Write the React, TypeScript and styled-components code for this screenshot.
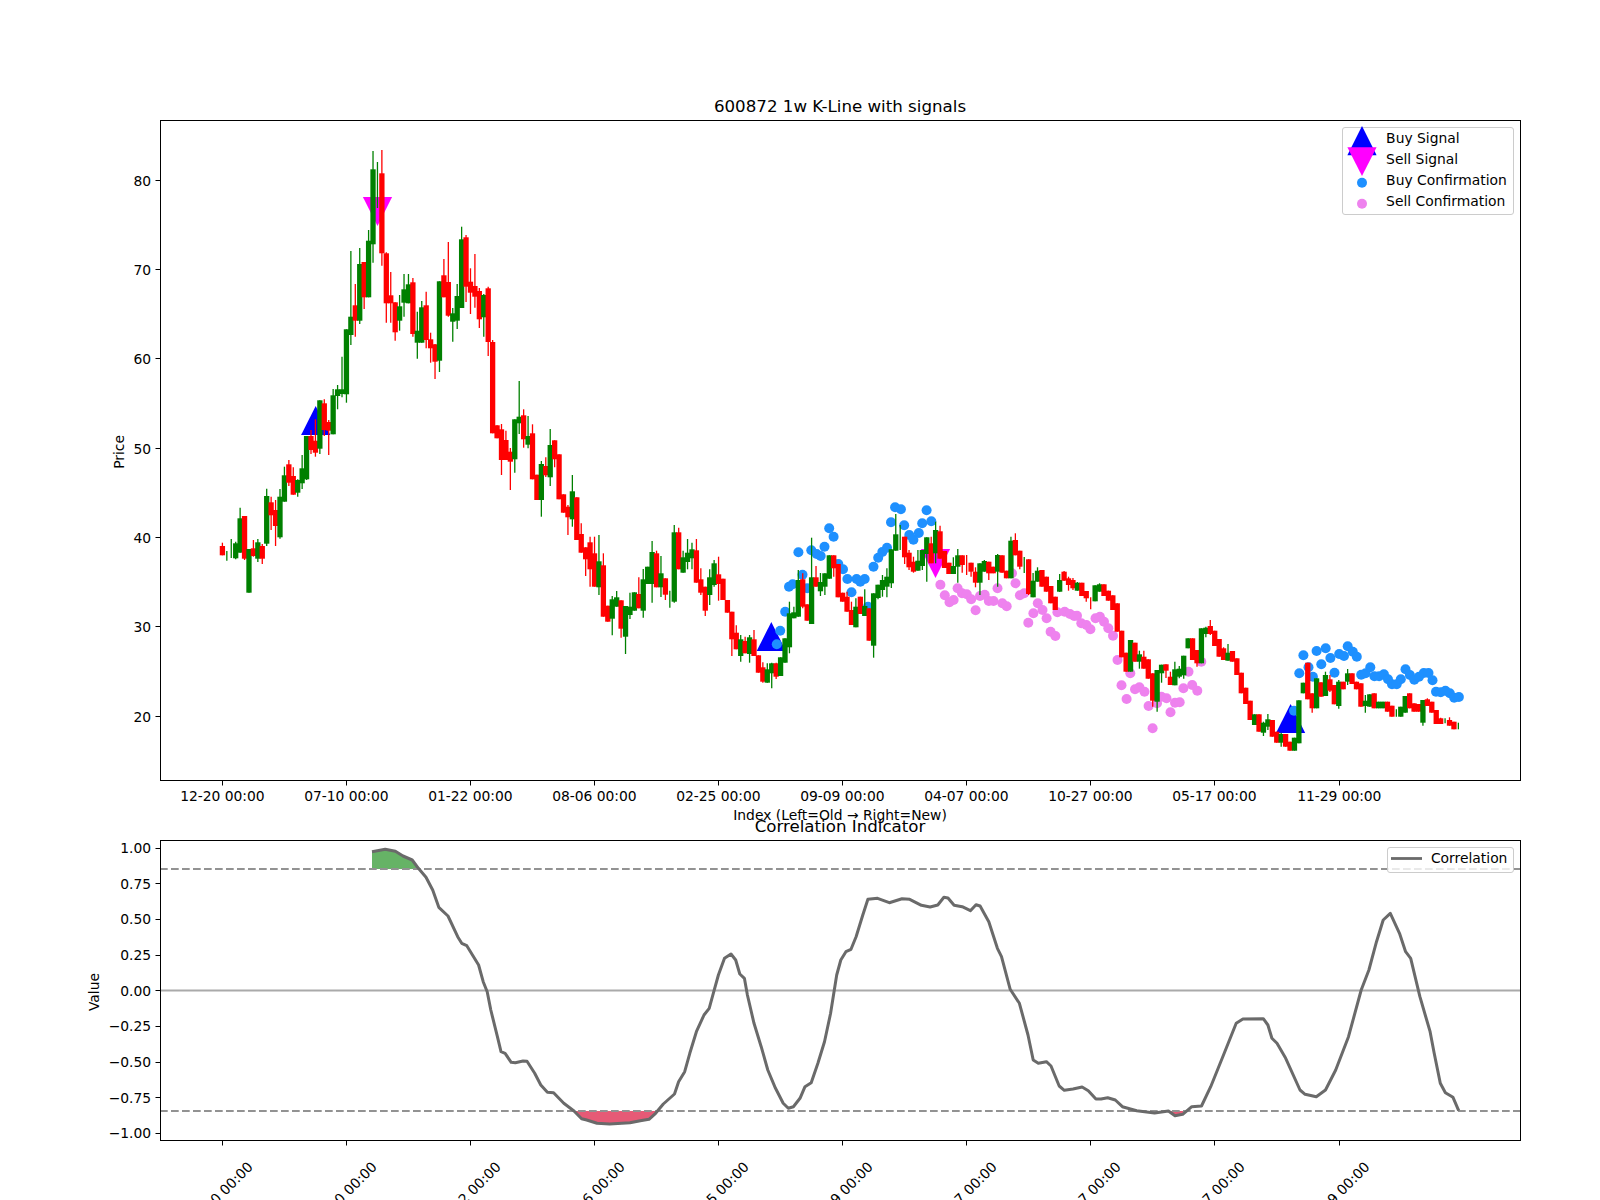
import styled, { createGlobalStyle } from "styled-components";

type Candle = ["g" | "r", number, number, number?, number?];
type Point = [number, number];

const GlobalStyle = createGlobalStyle`
  html, body {
    margin: 0;
    padding: 0;
    background: #fff;
  }
`;

// y values are pixels of the 1600x1200 figure, top of body, bottom of body, then wick ends
const candles: Candle[] = [
  ["r", 546, 555.3, 542.7, 555.3], ["g", 0, 0, 551, 560.7], ["g", 0, 0, 539, 558], ["g", 543.3, 558.3, 541.7, 559.3],
  ["g", 518.3, 552.7, 507.7, 552.7], ["r", 516, 558.7, 516, 560], ["g", 549, 592.7], ["r", 548.3, 556, 540, 556.7],
  ["g", 542.3, 558.7, 539, 562], ["r", 546, 558.7, 544, 564], ["g", 496, 543.7, 488.7, 546], ["r", 502.3, 515.3, 496.7, 530],
  ["r", 510, 526, 500, 546], ["g", 496.7, 537.3, 489, 538.7], ["g", 475.3, 501.7, 466.7, 501.7], ["r", 464.3, 482.7, 460, 486],
  ["r", 476, 494.7, 467.3, 494.7], ["g", 480, 492.7, 479.3, 496.7], ["g", 468.3, 483.3, 455, 489], ["g", 436, 479.3, 436, 480],
  ["r", 436, 450, 430, 454], ["r", 440.7, 452.7, 419.3, 456.7], ["g", 400.3, 448.7, 400.3, 454], ["r", 403.3, 430, 399.3, 436],
  ["r", 422, 430.7, 420, 455], ["g", 395.3, 434.3, 389, 434.3], ["g", 389.3, 396, 385, 409.3], ["g", 389.3, 394, 356.7, 397.3],
  ["g", 329.3, 394.3, 329.3, 402.7], ["g", 316.7, 335, 251, 345], ["r", 305.3, 320.7, 284, 336.7], ["g", 264, 320.7, 248, 324],
  ["r", 262, 297.3, 262, 309], ["g", 240.7, 297.3, 230, 297.3], ["g", 169.3, 244.3, 151, 262.7], ["g", 0, 0, 162, 208],
  ["r", 173.3, 253.3, 150, 265.7], ["r", 253.3, 303.3, 252.3, 322.7], ["r", 295.3, 303.3, 272, 322.7], ["r", 302.3, 332.3, 302.3, 340.7],
  ["g", 306.3, 320.7, 295, 330.7], ["g", 289.3, 302.7, 274, 316.7], ["g", 284.3, 303.3, 274, 303.3], ["r", 282.3, 334, 278, 336.7],
  ["g", 330.7, 342.7, 311.7, 358.7], ["g", 307.3, 342.7, 301, 342.7], ["r", 305.3, 340, 291.7, 348.3], ["r", 339.3, 348.3, 332.7, 362.7],
  ["r", 344.3, 361.7, 344, 379], ["g", 281.3, 360.7, 281.3, 372], ["r", 275.3, 297.3, 259, 297.3], ["r", 282, 315.7, 242, 316.7],
  ["g", 313.3, 321.7, 308, 341.7], ["g", 296, 320.7, 284, 329], ["g", 239.3, 308, 226.7, 308], ["r", 237.3, 286.7, 235, 302],
  ["r", 281.7, 292.7, 268.3, 314], ["r", 286, 296.7, 254, 307.7], ["r", 291, 319.3, 288, 328], ["g", 295, 317.3, 294, 336.7],
  ["r", 288.3, 342, 286.7, 356], ["r", 342, 433.3, 340, 433.3], ["r", 425.3, 438.3], ["r", 429.3, 460, 424, 475],
  ["r", 440, 460, 430.7, 460], ["r", 451.7, 461.7, 448, 490], ["g", 419.3, 459.3, 419.3, 472.7], ["g", 416.7, 423.3, 381, 434],
  ["r", 415.3, 439.3, 409.3, 447.7], ["g", 436, 444.7, 416, 448.3], ["r", 433.3, 479.3, 424.3, 479.3], ["r", 474.7, 500],
  ["g", 464, 500, 461, 516.7], ["r", 466, 475.3, 457.3, 477], ["g", 445, 477.3, 429, 486], ["r", 440.3, 459.3, 440.3, 467.3],
  ["r", 454.3, 499.3], ["r", 494.3, 512.7], ["r", 506.7, 517.3, 505, 535], ["g", 491.3, 519.3, 475, 526.7],
  ["r", 497.3, 540], ["r", 534, 552.7, 523.3, 552.7], ["r", 547.3, 559.3, 547.3, 576], ["r", 542.3, 569.3, 536.7, 586.7],
  ["r", 553.3, 586.7, 536.7, 586.7], ["g", 561.3, 587.3, 535, 595], ["r", 565.3, 616.7, 553.3, 616.7], ["r", 605.7, 621.7],
  ["g", 599.3, 618.7, 596, 635.3], ["g", 597.3, 606.7, 591, 606.7], ["r", 600.3, 628.7, 600.3, 637.7], ["g", 606, 636.7, 606, 654],
  ["g", 606.7, 615, 592.7, 619], ["g", 592.3, 610.7], ["r", 594, 608.3, 577.3, 608.3], ["g", 579.3, 610.7, 569, 617.7],
  ["g", 566.7, 584], ["g", 552, 584, 541, 602.7], ["r", 553.3, 587.3, 550.7, 587.3], ["g", 573.3, 587.3, 556, 597],
  ["r", 578.3, 594.7, 578.3, 600], ["g", 0, 0, 590.7, 607.7], ["g", 532.3, 601.7, 525, 602.7], ["r", 532.3, 569.3, 527.7, 569.3],
  ["g", 557.3, 572.7, 550.7, 572.7], ["g", 552.7, 562, 539, 569.3], ["g", 549.3, 558.3, 542.7, 569.3], ["r", 550.3, 582.7, 539, 582.7],
  ["r", 579.3, 592.7, 568.3, 595], ["r", 586.7, 610.7, 586.7, 616], ["g", 577.3, 595, 569.3, 605], ["g", 563.3, 585, 560, 586.7],
  ["r", 574.3, 584, 556.7, 600.7], ["r", 578.7, 600], ["r", 600, 612.7], ["r", 611.7, 639.3, 611.7, 656],
  ["r", 632.7, 649.3, 625.3, 649.3], ["g", 639.3, 656, 635, 661.7], ["r", 641, 653.3, 636.7, 653.3], ["g", 637.3, 654, 635, 662.7],
  ["r", 639.3, 656, 630, 656], ["r", 655.3, 672.7], ["r", 667.3, 681.7, 662.3, 682.7], ["g", 669.3, 682.7, 663.3, 682.7],
  ["g", 663.3, 673.3, 662.7, 688.3], ["r", 663.3, 676.7, 662.7, 679], ["g", 657.3, 676], ["g", 638.3, 662.7],
  ["g", 613.3, 647.3, 601.7, 653.3], ["g", 612.3, 618.3, 606.7, 618.3], ["g", 580, 616.7, 570, 616.7], ["r", 579.3, 606.7, 573.3, 608.3],
  ["r", 604.3, 620.7], ["g", 577.3, 624, 537.7, 624], ["r", 577.3, 586.7, 566, 586.7], ["g", 582, 591.3, 573, 596],
  ["g", 573.3, 586.7, 573.3, 595], ["g", 555.3, 578.7], ["r", 555.3, 568.3, 555.3, 576.7], ["r", 564, 597.3],
  ["r", 592.7, 601.7], ["r", 596.7, 611.7, 591.7, 611.7], ["r", 610, 625, 601.7, 625], ["g", 606.7, 627.3, 598.3, 627.3],
  ["r", 596.7, 614], ["g", 606, 616, 589.3, 616], ["r", 608.3, 640.7], ["g", 593.3, 645.7, 593.3, 657.7],
  ["g", 584.7, 598, 584.7, 599.3], ["g", 580, 590, 575, 596.7], ["g", 576.7, 586.7, 568.3, 597.3], ["g", 549.3, 583.3, 549.3, 588],
  ["g", 534.3, 550.7, 514, 550.7], ["g", 0, 0, 525, 550], ["r", 536.7, 557.3, 536.7, 564], ["r", 552.7, 567.3, 550, 570],
  ["r", 561.7, 571.7, 556.7, 572.7], ["g", 560.7, 570.7, 550, 570.7], ["g", 550, 566, 550, 570], ["g", 537.3, 554, 537.3, 581.7],
  ["r", 543.3, 563.3, 536.7, 563.3], ["g", 530, 553.3, 521.7, 563.3], ["r", 531.3, 558.7, 525.7, 558.7], ["r", 551, 568],
  ["r", 562.7, 574], ["g", 566, 574, 557.3, 573.3], ["g", 555.3, 566.7, 549, 582.7], ["r", 555.3, 565, 555.3, 572.7],
  ["r", 0, 0, 555, 575], ["r", 562.7, 571.7, 562.7, 576.7], ["r", 571.7, 582.7, 567.3, 587.3], ["g", 563.3, 582.7, 563.3, 595],
  ["g", 561, 571.7, 560, 571.7], ["r", 561.7, 573.3, 561.7, 580], ["r", 566.7, 573.3], ["g", 555, 571.7, 554, 586.7],
  ["r", 555.3, 572.7], ["r", 570.7, 578.3], ["g", 540.7, 578.3, 536.7, 578.3], ["r", 540, 555.3, 533.3, 555.3],
  ["r", 550.7, 566.7, 550.7, 569.3], ["g", 0, 0, 557, 573], ["r", 559.3, 594, 559.3, 595], ["g", 580.7, 597.3, 573, 597.3],
  ["g", 570.7, 581.7, 567.3, 581.7], ["r", 570, 586.7], ["r", 576.7, 591.7], ["r", 586, 603.3],
  ["r", 596.7, 610], ["g", 580, 591.7, 574, 592], ["r", 571.7, 580.7, 571, 581], ["r", 578.3, 585, 576.7, 590.7],
  ["r", 580, 588.3, 578, 590], ["g", 582.7, 590.7, 582, 590.7], ["r", 582.7, 596], ["r", 591, 598.3, 591, 601.7],
  ["r", 0, 0, 597.3, 609.3], ["g", 585.3, 601.3], ["g", 584.3, 591.7, 583.3, 591.7], ["r", 584.3, 596],
  ["r", 590.7, 600.7], ["r", 595.3, 610], ["r", 603.3, 631.7], ["r", 630.7, 657.3],
  ["r", 652.7, 671.7], ["g", 640, 671.7], ["r", 642.7, 661.7], ["g", 654.3, 661.7, 650.7, 668.7],
  ["r", 656.7, 668.7, 650.7, 668.7], ["r", 659.3, 678.7], ["r", 673.3, 700.7, 673.3, 706.7], ["g", 670, 701.7, 670, 711.7],
  ["g", 664.7, 673.3, 664.7, 682.7], ["r", 664.3, 670.7, 664.3, 678], ["r", 676.7, 685, 671.7, 685], ["g", 669.3, 685.3, 661.7, 685.3],
  ["g", 668.7, 676.7, 666, 678.3], ["g", 655.7, 675.3, 655.7, 678.7], ["g", 638.3, 648.3], ["r", 638.3, 660],
  ["r", 650, 663.3, 650, 666.7], ["g", 628.3, 663.3], ["g", 627.7, 634, 626.7, 637.3], ["r", 626, 634, 620, 635],
  ["r", 630.7, 646], ["r", 639, 656.7], ["r", 648.3, 660, 647.3, 660], ["g", 652.7, 660.7, 644, 660.7],
  ["r", 651, 661.7], ["r", 658.3, 675], ["r", 672.7, 693.3], ["r", 687.7, 704],
  ["r", 700.7, 720], ["g", 714.3, 725], ["r", 714.3, 731.7], ["g", 722.7, 732.7, 721.7, 736],
  ["g", 719.3, 726.7, 714, 730], ["r", 720, 736.7], ["r", 731.7, 742.7], ["g", 734, 742.7, 732.7, 746.7],
  ["r", 734, 746.7], ["r", 741.7, 750.7], ["g", 737.7, 750.7], ["g", 700.3, 743.3],
  ["g", 682.7, 693.3], ["r", 662.7, 699.3], ["r", 693.3, 708.3, 693.3, 712.7], ["g", 678.3, 708.3],
  ["r", 682.3, 696.7], ["g", 675, 696, 671.7, 696], ["r", 679.3, 690.7, 675, 692], ["r", 685, 704.3],
  ["g", 681.7, 706, 680, 708.7], ["r", 681.7, 689.3], ["g", 673.3, 681.7, 669, 685], ["r", 673.3, 684],
  ["r", 681.7, 689.3], ["r", 683.3, 706.7], ["g", 700.7, 706, 695, 712.7], ["g", 694.3, 706.7],
  ["r", 693.3, 708.3], ["g", 701.7, 708.3], ["g", 701.7, 708.3], ["r", 701.7, 711.7],
  ["r", 705.7, 716.7], ["g", 0, 0, 709.3, 716.7], ["g", 706.7, 716.7], ["g", 696, 712.7],
  ["r", 693.3, 708.3], ["r", 703.3, 711.7], ["r", 704, 711.7], ["g", 700, 722.7, 700, 725.7],
  ["r", 699.3, 706, 698.3, 706], ["r", 701.7, 712.7], ["r", 710, 724], ["r", 718.3, 724, 717.7, 724],
  ["g", 0, 0, 718.3, 723.3], ["r", 720, 725.7, 717.3, 725.7], ["r", 721.7, 729.3], ["g", 0, 0, 722.7, 729.3],
];

const buyDots: Point[] = [
  [780.2, 630.7], [776.8, 644.3], [785.2, 611.7], [789, 586.7], [792.7, 584.3], [802.5, 574.7], [798.4, 552.3], [807.2, 588.3],
  [811.3, 550.3], [816.7, 554], [820.7, 556], [824.5, 546.7], [829.2, 528.3], [833.6, 536.7], [838.3, 564], [843, 569.3],
  [847.4, 579], [851.5, 592.3], [856.6, 579], [860.3, 581.7], [864.7, 579], [868, 606.7], [873.5, 566.7], [878.2, 557.7],
  [882.3, 552], [887, 547.7], [891, 522.3], [895.1, 507.3], [900.9, 509.3], [904.2, 525.3], [909.3, 535], [913.4, 539.7],
  [918.8, 533], [922.2, 523.3], [926.6, 510.3], [931.3, 521.3], [1294, 710.7], [1299.3, 673.3], [1303.4, 655.3], [1308.5, 667.3],
  [1312.9, 676.7], [1316.6, 651], [1321.3, 664.3], [1325.7, 648.3], [1330.4, 658], [1334.5, 672.7], [1339.2, 654], [1344, 656],
  [1347.7, 646.3], [1352.8, 651.7], [1356.8, 656.7], [1361.2, 674.7], [1365.6, 673.3], [1370.3, 667.3], [1374.4, 676.3], [1379.1, 676.3],
  [1383.9, 674.3], [1388, 679.3], [1392, 684.3], [1396.7, 684.3], [1400.8, 679.3], [1405.5, 669.3], [1409.9, 675], [1414.3, 679.7],
  [1419, 676.7], [1423.8, 673], [1428.5, 673], [1432.5, 680.3], [1436, 691.7], [1440.7, 692.3], [1445.4, 690.7], [1449.8, 693.3],
  [1454.2, 697.7], [1458.9, 697],
];

const sellDots: Point[] = [
  [940.4, 584.7], [944.8, 595.3], [949.5, 602.3], [953.6, 600], [957.6, 588.3], [962, 593.3], [966.8, 594.3], [971.2, 599.3],
  [975.6, 610.3], [980, 596], [984.7, 594.7], [988.8, 601], [993.5, 601], [997.5, 588.3], [1002.3, 603.3], [1006.7, 606.3],
  [1012, 573.3], [1015.5, 583.3], [1019.9, 595.3], [1024.2, 593.3], [1028.3, 622.7], [1033.4, 613.3], [1037.8, 603.3], [1042.5, 610],
  [1046.6, 618.3], [1050.6, 631.7], [1055.4, 636], [1057.4, 612.3], [1064.7, 611.7], [1070, 614], [1074.2, 616], [1077, 615.7],
  [1081.3, 623.3], [1086.4, 625], [1090.4, 629.3], [1095.5, 618.3], [1099.9, 616.7], [1104, 621.7], [1108.3, 628.3], [1113, 635.7],
  [1117.5, 660], [1121.5, 685.3], [1126.6, 699], [1130.3, 673.3], [1135, 689.3], [1139.4, 687.3], [1144.5, 691.7], [1148.6, 706],
  [1152.6, 728.3], [1157, 703.3], [1161.4, 696.7], [1166.5, 698.3], [1170.5, 712.3], [1175, 702.7], [1179.7, 702.3], [1183.4, 688.3],
  [1188.5, 671.7], [1192.2, 685], [1197.3, 690.7], [1201.3, 661.7],
];

const correlation: Point[] = [
  [372, 851.7], [385.2, 849.3], [395.4, 851.3], [403, 856], [412.2, 860], [418.4, 868.3], [426, 877.3], [432.7, 890],
  [438.8, 907.3], [448, 916], [457.7, 936.7], [461.7, 943.3], [466.8, 945.7], [478.6, 965], [483.2, 981.7], [487.2, 991.7],
  [490.8, 1010], [497.4, 1036.7], [501, 1051.7], [505.1, 1053.3], [511.2, 1062.3], [515.3, 1062.7], [523, 1061], [527, 1061.3],
  [534.7, 1073.3], [540.8, 1085], [547.4, 1092.3], [553.6, 1092.7], [563.8, 1103.3], [574, 1111], [581.6, 1118.7], [586.7, 1120],
  [597, 1123.3], [609.7, 1124], [630, 1122.7], [640.3, 1120.7], [649, 1119.3], [655.6, 1113.3], [663.3, 1104], [674.5, 1094],
  [678.6, 1081.7], [684.7, 1071.7], [689.8, 1053.3], [696.4, 1031.7], [704, 1015], [709.2, 1008.3], [713.3, 993.3], [718.4, 975],
  [724.5, 958.3], [731, 954], [735.7, 960], [739.8, 974], [744.4, 978.3], [747.4, 995], [754, 1023.3], [761.2, 1046.7],
  [767.8, 1070], [775.5, 1088.3], [783.2, 1103.3], [788.3, 1108.3], [793.4, 1106.7], [800, 1098.3], [805, 1086.7], [811.2, 1082.7],
  [817.9, 1063.3], [824.5, 1041.7], [830.6, 1013.3], [836.7, 975], [840.8, 960], [845.9, 951.7], [851, 949.3], [856.1, 936.7],
  [862.8, 915], [867.9, 899.3], [877.6, 898.3], [889.3, 902.7], [902, 898.7], [909.7, 899.3], [921.4, 905.3], [930.1, 907],
  [937.8, 905], [943.9, 897.3], [948, 898], [954.1, 905.3], [962.2, 906.7], [970.4, 910.7], [976, 904.7], [980.1, 906],
  [988.8, 921.7], [997.4, 948.3], [1001.5, 956.7], [1010.2, 989.3], [1019.4, 1003.3], [1028, 1035], [1033.2, 1060], [1038.3, 1063.3],
  [1046.4, 1061.7], [1051, 1066], [1059.2, 1086], [1064.3, 1090.3], [1073, 1089], [1082.1, 1087], [1088.3, 1090.7], [1095.9, 1099],
  [1101, 1099], [1107.7, 1097.7], [1115.3, 1100], [1122.4, 1106.7], [1136.7, 1110.7], [1154.6, 1113], [1168.4, 1111], [1175, 1115.7],
  [1182.7, 1114.3], [1191.8, 1106.7], [1201.5, 1106], [1210.7, 1086.7], [1223.5, 1055], [1236.2, 1023.3], [1242.9, 1019], [1263.3, 1018.7],
  [1267.9, 1025], [1271.9, 1038.3], [1277, 1043.3], [1285.7, 1058.3], [1300, 1090], [1305.1, 1094.3], [1316.3, 1096.7], [1325.5, 1090],
  [1335.7, 1070], [1348.5, 1036.7], [1361.2, 990], [1368.9, 970], [1376.5, 941.7], [1383.2, 920], [1390.3, 913.3], [1399.5, 933.3],
  [1405.6, 951.7], [1410.7, 958.3], [1419.9, 996.7], [1430.1, 1031.7], [1434.2, 1053.3], [1440.3, 1083.3], [1445.4, 1092.7], [1453, 1097.3],
  [1458.7, 1110.7],
];

const dateLabels = [
  "12-20 00:00", "07-10 00:00", "01-22 00:00", "08-06 00:00", "02-25 00:00",
  "09-09 00:00", "04-07 00:00", "10-27 00:00", "05-17 00:00", "11-29 00:00",
];
const dateTicks = [222.4, 346.4, 470.4, 594.4, 718.4, 842.4, 966.4, 1090.4, 1214.4, 1339.3];
const priceTicks = [20, 30, 40, 50, 60, 70, 80];
const valueTicks = [1, 0.75, 0.5, 0.25, 0, -0.25, -0.5, -0.75, -1];

const candleX = (i: number) => 222.4 + 4.43 * i;
const priceY = (p: number) => 180.3 + (80 - p) * 8.93;
const valueY = (v: number) => 990.7 - 142.65 * v;
const snap = (n: number) => Math.floor(n) + 0.5;
const formatValue = (v: number) => (v < 0 ? "\u2212" : "") + Math.abs(v).toFixed(2);
const toPoints = (pts: Point[]) => pts.map((p) => p.join(",")).join(" ");

const Triangle = ({ x, y, down }: { x: number; y: number; down?: boolean }) => {
  const base = down ? y - 29 : y + 29;
  return (
    <polygon
      points={`${x},${y} ${x - 14.6},${base} ${x + 14.6},${base}`}
      fill={down ? "#ff00ff" : "#0000ff"}
    />
  );
};

const TickMarks = ({ xs, ys, bottom, left }: { xs: number[]; ys: number[]; bottom: number; left: number }) => (
  <g stroke="#000" strokeWidth={1}>
    {xs.map((x) => (
      <line key={x} x1={snap(x)} x2={snap(x)} y1={bottom} y2={bottom + 5} />
    ))}
    {ys.map((y) => (
      <line key={y} x1={left - 5} x2={left} y1={snap(y)} y2={snap(y)} />
    ))}
  </g>
);

const PriceChart = () => (
  <Plot width={1360} height={660} viewBox="160 120 1360 660">
    <Triangle x={315.7} y={406} />
    <Triangle x={377.5} y={226} down />
    <Triangle x={771.3} y={622} />
    <Triangle x={935.5} y={578} down />
    <Triangle x={1290.6} y={704} />
    {buyDots.map(([x, y]) => (
      <circle key={`${x}-${y}`} cx={x} cy={y} r={5} fill="#1e90ff" />
    ))}
    {sellDots.map(([x, y]) => (
      <circle key={`${x}-${y}`} cx={x} cy={y} r={5} fill="#ee82ee" />
    ))}
    {candles.map(([tone, top, bottom, wickTop, wickBottom], i) => {
      const colour = tone === "g" ? "#008000" : "#ff0000";
      const x = candleX(i);
      return (
        <g key={i} fill={colour} stroke={colour}>
          <line x1={x} x2={x} y1={wickTop ?? top} y2={wickBottom ?? bottom} strokeWidth={1.3} />
          {top > 0 && <rect x={x - 2.65} y={top} width={5.3} height={bottom - top} stroke="none" />}
        </g>
      );
    })}
    <rect x={160.5} y={120.5} width={1360} height={660} fill="none" stroke="#000" />
    <TickMarks xs={dateTicks} ys={priceTicks.map(priceY)} bottom={780.5} left={160.5} />
    {dateTicks.map((x, i) => (
      <TickText key={x} x={x} y={801} textAnchor="middle">
        {dateLabels[i]}
      </TickText>
    ))}
    {priceTicks.map((p) => (
      <TickText key={p} x={151} y={priceY(p) + 5.5} textAnchor="end">
        {p}
      </TickText>
    ))}
  </Plot>
);

const CorrelationChart = () => {
  const last = correlation[correlation.length - 1];
  const first = correlation[0];
  const line = toPoints(correlation);
  return (
    <Plot width={1360} height={300} viewBox="160 840 1360 300">
      <defs>
        <clipPath id="above-upper">
          <rect x={160} y={840} width={1360} height={29} />
        </clipPath>
        <clipPath id="below-lower">
          <rect x={160} y={1111} width={1360} height={29} />
        </clipPath>
      </defs>
      <polygon
        points={`${line} ${last[0]},869 ${first[0]},869`}
        fill="#008000"
        fillOpacity={0.6}
        clipPath="url(#above-upper)"
      />
      <polygon
        points={`${line} ${last[0]},1111 ${first[0]},1111`}
        fill="#dc143c"
        fillOpacity={0.7}
        clipPath="url(#below-lower)"
      />
      <line x1={160} x2={1520} y1={990.5} y2={990.5} stroke="#aaa" strokeWidth={2} />
      <line x1={160} x2={1520} y1={869} y2={869} stroke="#929292" strokeWidth={2} strokeDasharray="7.7 3.3" />
      <line x1={160} x2={1520} y1={1111} y2={1111} stroke="#929292" strokeWidth={2} strokeDasharray="7.7 3.3" />
      <polyline points={line} fill="none" stroke="#6a6a6a" strokeWidth={3} strokeLinejoin="round" />
      <rect x={160.5} y={840.5} width={1360} height={300} fill="none" stroke="#000" />
      <TickMarks xs={dateTicks} ys={valueTicks.map(valueY)} bottom={1140.5} left={160.5} />
      {dateTicks.map((x, i) => (
        <TickText key={x} x={x - 2} y={1199} textAnchor="middle" transform={`rotate(-45 ${x - 2} 1194)`}>
          {dateLabels[i]}
        </TickText>
      ))}
      {valueTicks.map((v) => (
        <TickText key={v} x={151} y={valueY(v) + 5} textAnchor="end">
          {formatValue(v)}
        </TickText>
      ))}
    </Plot>
  );
};

type GlyphKind = "buy" | "sell" | "buyDot" | "sellDot" | "line";

const LegendRow = ({ kind, label }: { kind: GlyphKind; label: string }) => (
  <Row>
    <Glyph $wide={kind !== "line"} viewBox={kind === "line" ? "0 -10.5 31 21" : "-19 -10.5 38 21"}>
      {kind === "buy" && <polygon points="0,-12.6 -14.6,16.7 14.6,16.7" fill="#0000ff" />}
      {kind === "sell" && <polygon points="0,16.5 -14.6,-12.2 14.6,-12.2" fill="#ff00ff" />}
      {kind === "buyDot" && <circle cx={0} cy={2.2} r={5} fill="#1e90ff" />}
      {kind === "sellDot" && <circle cx={0} cy={2.3} r={5} fill="#ee82ee" />}
      {kind === "line" && <line x1={0} x2={31} y1={0} y2={0} stroke="#6a6a6a" strokeWidth={2.8} />}
    </Glyph>
    {label}
  </Row>
);

const App = () => (
  <Page>
    <GlobalStyle />
    <Heading>600872 1w K-Line with signals</Heading>
    <ChartRow>
      <AxisName $gap={33}>Price</AxisName>
      <Frame>
        <PriceChart />
        <Legend $width={171.4}>
          <LegendRow kind="buy" label="Buy Signal" />
          <LegendRow kind="sell" label="Sell Signal" />
          <LegendRow kind="buyDot" label="Buy Confirmation" />
          <LegendRow kind="sellDot" label="Sell Confirmation" />
        </Legend>
      </Frame>
    </ChartRow>
    <XAxisName>Index (Left=Old → Right=New)</XAxisName>
    <SubHeading>Correlation Indicator</SubHeading>
    <ChartRow>
      <AxisName $gap={58}>Value</AxisName>
      <Frame>
        <CorrelationChart />
        <Legend $width={126.6}>
          <LegendRow kind="line" label="Correlation" />
        </Legend>
      </Frame>
    </ChartRow>
  </Page>
);

export default App;

const Page = styled.div`
  width: 1600px;
  height: 1200px;
  overflow: hidden;
  background: #fff;
  padding-top: 97px;
  box-sizing: border-box;
  font-family: "DejaVu Sans", sans-serif;
  color: #000;
`;

const Heading = styled.h1`
  margin: 0 0 3px 160px;
  width: 1360px;
  height: 20px;
  font-size: 16.67px;
  font-weight: 400;
  line-height: 20px;
  text-align: center;
`;

const SubHeading = styled(Heading)`
  margin-top: -6px;
`;

const ChartRow = styled.div`
  display: grid;
  grid-template-columns: 160px 1360px;
`;

const AxisName = styled.div<{ $gap: number }>`
  justify-self: end;
  align-self: center;
  margin: 4px ${({ $gap }) => $gap}px 0 0;
  writing-mode: vertical-rl;
  transform: rotate(180deg);
  font-size: 13.89px;
  line-height: 16px;
`;

const Frame = styled.div`
  position: relative;
`;

const Plot = styled.svg`
  display: block;
  overflow: visible;
`;

const TickText = styled.text`
  font-family: "DejaVu Sans", sans-serif;
  font-size: 13.89px;
  letter-spacing: -0.05px;
  fill: #000;
`;

const XAxisName = styled.div`
  margin: 27px 0 0 160px;
  width: 1360px;
  height: 16px;
  font-size: 13.89px;
  line-height: 16px;
  text-align: center;
`;

const Legend = styled.div<{ $width: number }>`
  position: absolute;
  top: 7px;
  right: 6.5px;
  box-sizing: border-box;
  width: ${({ $width }) => $width}px;
  padding-bottom: 2.7px;
  border: 1px solid #ccc;
  border-radius: 3px;
  background: rgba(255, 255, 255, 0.8);
  font-size: 13.89px;
`;

const Row = styled.div`
  display: flex;
  align-items: center;
  height: 20.9px;
  line-height: 16px;
`;

const Glyph = styled.svg<{ $wide: boolean }>`
  flex: none;
  overflow: visible;
  height: 21px;
  width: ${({ $wide }) => ($wide ? 38 : 31)}px;
  margin: ${({ $wide }) => ($wide ? "0 5px 0 0" : "0 9px 0 3px")};
`;
